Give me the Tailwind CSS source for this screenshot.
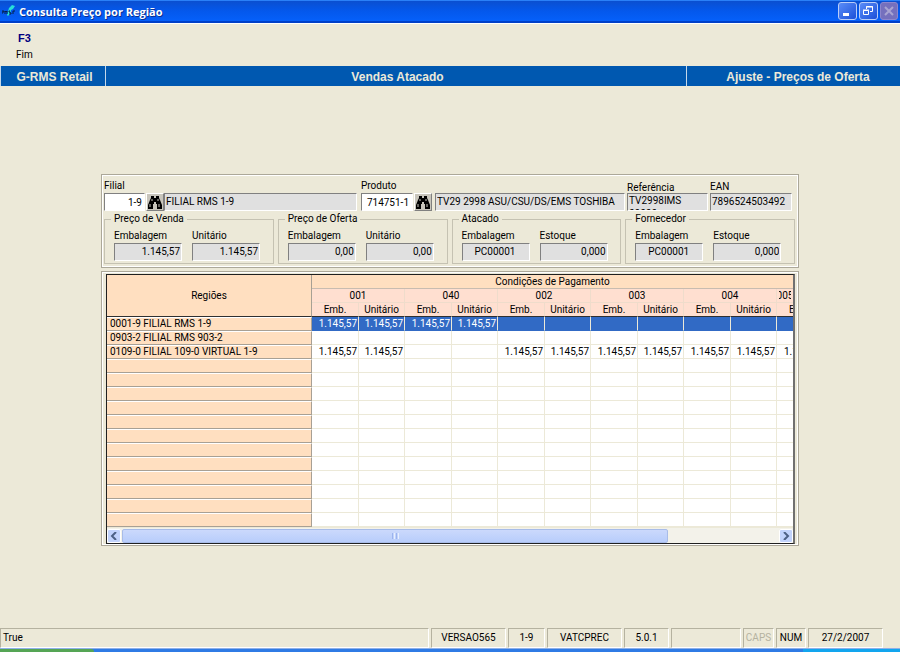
<!DOCTYPE html>
<html lang="pt-BR">

<head>
    <meta charset="UTF-8" />
    <meta name="viewport" content="width=device-width, initial-scale=1.0" />
    <title>Consulta Preço por Região</title>
    <script src="https://cdn.jsdelivr.net/npm/@tailwindcss/browser@4"></script>
</head>

<body class="bg-[#ece9d8] min-h-screen flex flex-col font-[Roboto,'Liberation_Sans',sans-serif] text-[10px] leading-[14px] text-black overflow-hidden">

    <!-- Barra de título -->
    <header class="h-[23px] shrink-0 flex items-center bg-linear-to-b from-[#0a4fd0] via-[#0458ec] to-[#0560fa] border-t border-[#2a80f8] border-b-2 border-b-[#0040c8] pl-[2px] pr-[2px]">
        <svg class="w-[14px] h-[14px] mr-[3px]" viewBox="0 0 14 14" fill="none">
            <path d="M5 11 7 4l3-3 3 1-2 3-2 1-1 4-2 2z" fill="#27e0d8" />
            <path d="M0 7h2v1H0v2M3 10V7l1 1 1-1v3M8 7H7v1l2 1v1H7M13 7h-2v3" stroke="#04204a" stroke-width="1" />
        </svg>
        <h1 class="font-['Open_Sans',sans-serif] font-bold text-[11px] text-white flex-1 [text-shadow:1px_1px_0_#0a2f90] pt-px">Consulta Preço por Região</h1>
        <div class="flex gap-[2px]">
            <button aria-label="Minimizar" class="w-[19px] h-[18px] rounded-[3px] border border-[#b9cdf8] bg-linear-to-br from-[#5a8cf8] to-[#1c4fd8]">
                <svg viewBox="0 0 16 16" class="w-4 h-4"><path d="M4 10h6v3H4z" fill="#fff" /></svg>
            </button>
            <button aria-label="Restaurar" class="w-[19px] h-[18px] rounded-[3px] border border-[#b9cdf8] bg-linear-to-br from-[#5a8cf8] to-[#1c4fd8]">
                <svg viewBox="0 0 16 16" class="w-4 h-4" fill="none" stroke="#fff"><path d="M6.500 6V3.500h6v5H10M6 4h7M3.500 7.500h5v4h-5zM3 7h6" /></svg>
            </button>
            <button aria-label="Fechar" disabled class="w-[18px] h-[18px] rounded-[3px] border border-[#8d86cc] bg-[#7570bd]">
                <svg viewBox="0 0 16 16" class="w-4 h-4"><path d="M4 4l8 8M12 4l-8 8" stroke="#a9a5d2" stroke-width="2" /></svg>
            </button>
        </div>
    </header>

    <!-- Menu de teclas -->
    <nav class="h-[43px] shrink-0 border-t border-white pl-4 pt-[7px]">
        <button class="flex flex-col items-center gap-[3px]">
            <span class="font-['Liberation_Sans',sans-serif] font-bold text-[11px] text-[#000080]">F3</span>
            <span>Fim</span>
        </button>
    </nav>

    <div class="h-5 shrink-0 flex bg-[#0058b0] font-['Liberation_Sans',sans-serif] font-bold text-xs leading-[22px] text-[#ece9d8] text-center">
        <div class="w-[106px] border-x border-[#c4d8ea] pl-[3px]">G-RMS Retail</div>
        <div class="flex-1 pl-[3px]">Vendas Atacado</div>
        <div class="w-[214px] border-l border-[#c4d8ea] pl-[9px]">Ajuste - Preços de Oferta</div>
    </div>

    <main class="flex-1 w-full max-w-[698px] mx-auto pt-[88px]">

        <!-- Filtro e produto -->
        <form class="border border-[#aca899] outline outline-white -outline-offset-2 pl-[2px] pr-[3px] pt-1 h-[94px]">
            <div class="flex items-end">
                <div class="w-[41px]">
                    <label for="filial" class="block">Filial</label>
                    <input id="filial" value="1-9" class="block w-full h-[18px] bg-white text-right pr-[2px] border border-t-[#808080] border-l-[#808080] border-b-white border-r-white" />
                </div>
                <button type="button" aria-label="Procurar filial" class="w-[18px] h-[18px] ml-[1px] flex items-center justify-center bg-[#c8c5bb] border border-t-white border-l-white border-b-[#808080] border-r-[#808080]">
                    <svg viewBox="0 0 14 13" class="w-[14px] h-[13px]"><path d="M3 0h3v2h2V0h3v2l1 2 2 5v4H9V8H8V6H6v2H5v5H0V9l2-5 1-2z" /><path d="M2 8v3M4 3v2M10 3v2M11 8v3" stroke="#c8c5bb" /></svg>
                </button>
                <input aria-label="Nome da filial" readonly value="FILIAL RMS 1-9" class="flex-1 min-w-0 h-[18px] bg-[#e0e0e0] pl-[1px] pb-[2px] border border-t-[#808080] border-l-[#808080] border-b-white border-r-white" />
                <div class="w-[52px] ml-1">
                    <label for="produto" class="block">Produto</label>
                    <input id="produto" value="714751-1" class="block w-full h-[18px] bg-white text-right pr-[3px] border border-t-[#808080] border-l-[#808080] border-b-white border-r-white" />
                </div>
                <button type="button" aria-label="Procurar produto" class="w-[18px] h-[18px] ml-[1px] flex items-center justify-center bg-[#c8c5bb] border border-t-white border-l-white border-b-[#808080] border-r-[#808080]">
                    <svg viewBox="0 0 14 13" class="w-[14px] h-[13px]"><path d="M3 0h3v2h2V0h3v2l1 2 2 5v4H9V8H8V6H6v2H5v5H0V9l2-5 1-2z" /><path d="M2 8v3M4 3v2M10 3v2M11 8v3" stroke="#c8c5bb" /></svg>
                </button>
                <input aria-label="Descrição do produto" readonly value="TV29 2998 ASU/CSU/DS/EMS TOSHIBA" class="w-[190px] h-[18px] ml-[3px] bg-[#e0e0e0] pl-[1px] pb-[2px] border border-t-[#808080] border-l-[#808080] border-b-white border-r-white" />
                <div class="w-[81px] ml-[2px]">
                    <label for="referencia" class="block leading-[10px]">Referência</label>
                    <textarea id="referencia" readonly class="block w-full h-[18px] resize-none overflow-hidden leading-[13px] bg-[#e0e0e0] pl-[1px] border border-t-[#808080] border-l-[#808080] border-b-white border-r-white">TV2998IMS
00000</textarea>
                </div>
                <div class="w-[82px] ml-[2px] mr-[3px]">
                    <label for="ean" class="block leading-3">EAN</label>
                    <input id="ean" readonly value="7896524503492" class="block w-full h-[18px] bg-[#e0e0e0] pl-[1px] pb-[2px] border border-t-[#808080] border-l-[#808080] border-b-white border-r-white" />
                </div>
            </div>

            <div id="grupos" class="grid grid-cols-4 gap-1 pt-[1px]"></div>
        </form>

        <!-- Tabela de preços -->
        <section class="mt-[3px] border border-[#aca899] outline outline-white -outline-offset-2 pl-1 pr-[3px] pt-[2px] pb-[1px]">
            <div class="border border-[#202020] border-r-2 border-r-[#707070] bg-white">
                <table class="w-full table-fixed border-separate border-spacing-0 leading-3">
                    <colgroup>
                        <col class="w-[205px]" />
                        <col class="w-[47px]" /><col class="w-[46px]" />
                        <col class="w-[47px]" /><col class="w-[46px]" />
                        <col class="w-[47px]" /><col class="w-[46px]" />
                        <col class="w-[47px]" /><col class="w-[46px]" />
                        <col class="w-[47px]" /><col class="w-[46px]" />
                        <col />
                    </colgroup>
                    <thead id="cabecalho">
                        <tr class="h-[14px] bg-[#ffdfc0]">
                            <th rowspan="3" class="p-0 font-normal border-r border-[#a8a094] border-b border-b-[#303030]">Regiões</th>
                            <th colspan="11" class="p-0 font-normal border-b border-[#c8bcb0]">Condições de Pagamento</th>
                        </tr>
                    </thead>
                    <tbody id="linhas"></tbody>
                </table>
                <!-- Barra de rolagem -->
                <div class="h-4 flex bg-[#f3f2ea] border-t border-[#ece9d8] pt-[1px]">
                    <button aria-label="Rolar para a esquerda" class="w-[14px] h-[14px] rounded-[2px] bg-[#c2d3fc] border border-white flex items-center justify-center">
                        <svg viewBox="0 0 8 8" class="w-2 h-2" fill="none"><path d="M6 0 2 4l4 4" stroke="#4d6185" stroke-width="2" /></svg>
                    </button>
                    <div class="flex-1 flex">
                        <div class="w-[83%] h-[14px] ml-[1px] rounded-[2px] border border-[#a8bce8] bg-linear-to-b from-[#cbd9fc] to-[#b8cdfb] flex items-center justify-center gap-[1px]">
                            <span class="w-px h-[6px] bg-[#9cb4ee]"></span>
                            <span class="w-px h-[6px] bg-[#e8effe]"></span>
                            <span class="w-px h-[6px] bg-[#9cb4ee]"></span>
                            <span class="w-px h-[6px] bg-[#e8effe]"></span>
                        </div>
                    </div>
                    <button aria-label="Rolar para a direita" class="w-[14px] h-[14px] rounded-[2px] bg-[#c2d3fc] border border-white flex items-center justify-center">
                        <svg viewBox="0 0 8 8" class="w-2 h-2" fill="none"><path d="M2 0l4 4-4 4" stroke="#4d6185" stroke-width="2" /></svg>
                    </button>
                </div>
            </div>
        </section>
    </main>

    <!-- Barra de status -->
    <footer class="shrink-0 h-5 flex gap-[2px] pr-[17px] text-center leading-[18px]">
        <div class="flex-1 text-left pl-[2px] border border-t-[#b5b2a0] border-l-[#b5b2a0] border-white">True</div>
        <div class="w-[75px] border border-t-[#b5b2a0] border-l-[#b5b2a0] border-white">VERSAO565</div>
        <div class="w-[37px] border border-t-[#b5b2a0] border-l-[#b5b2a0] border-white">1-9</div>
        <div class="w-[75px] border border-t-[#b5b2a0] border-l-[#b5b2a0] border-white">VATCPREC</div>
        <div class="w-[45px] border border-t-[#b5b2a0] border-l-[#b5b2a0] border-white">5.0.1</div>
        <div class="w-[70px] border border-t-[#b5b2a0] border-l-[#b5b2a0] border-white"></div>
        <div class="w-[31px] border border-t-[#b5b2a0] border-l-[#b5b2a0] border-white text-[#b5b2a0]">CAPS</div>
        <div class="w-[30px] border border-t-[#b5b2a0] border-l-[#b5b2a0] border-white">NUM</div>
        <div class="w-[75px] border border-t-[#b5b2a0] border-l-[#b5b2a0] border-white">27/2/2007</div>
    </footer>

    <!-- Borda da barra de tarefas -->
    <div class="shrink-0 h-1 flex bg-[#2f7be5] border-t border-[#8fb0e8]">
        <div class="w-[94px] bg-[#55a555] rounded-tr-sm"></div>
        <div class="flex-1"></div>
        <div class="w-[97px] bg-[#12a5ee]"></div>
    </div>

    <script>
        const grupos = [
            ["Preço de Venda", "Embalagem", "1.145,57", "Unitário", "1.145,57"],
            ["Preço de Oferta", "Embalagem", "0,00", "Unitário", "0,00"],
            ["Atacado", "Embalagem", "PC00001", "Estoque", "0,000"],
            ["Fornecedor", "Embalagem", "PC00001", "Estoque", "0,000"]
        ];

        const campo = "block w-full h-[18px] pr-[1px] pb-[2px] bg-[#e0e0e0] border border-t-[#808080] border-l-[#808080] border-b-white border-r-white";

        document.getElementById("grupos").innerHTML = grupos.map(([titulo, l1, v1, l2, v2], i) => `
            <fieldset class="border border-[#c5c2b2] h-[52px] px-[9px] min-w-0">
                <legend class="px-[3px] -ml-[3px]">${titulo}</legend>
                <div class="flex gap-[10px] pt-[3px]">
                    <div class="w-[68px]">
                        <label for="a${i}" class="block">${l1}</label>
                        <input id="a${i}" readonly value="${v1}" class="${campo} ${v1.startsWith("PC") ? "text-center" : "text-right"}" />
                    </div>
                    <div class="w-[68px]">
                        <label for="b${i}" class="block">${l2}</label>
                        <input id="b${i}" readonly value="${v2}" class="${campo} text-right" />
                    </div>
                </div>
            </fieldset>`).join("");

        // Cabeçalho: condições e colunas
        const condicoes = ["001", "040", "002", "003", "004"];
        const th = "p-0 font-normal border-r border-[#efdccb]";
        document.getElementById("cabecalho").insertAdjacentHTML("beforeend", `
            <tr class="h-[14px] bg-[#ffdfd0]">
                ${condicoes.map(c => `<th colspan="2" class="${th} border-b">${c}</th>`).join("")}
                <th class="p-0 font-normal border-b border-[#efdccb]"><div class="flex justify-center overflow-hidden mx-[2px]">005</div></th>
            </tr>
            <tr class="h-[14px] bg-[#ffdfd0]">
                ${condicoes.map(() => `<th class="${th} border-b border-b-[#303030]">Emb.</th><th class="${th} border-b border-b-[#303030]">Unitário</th>`).join("")}
                <th class="p-0 font-normal border-b border-[#303030]"><div class="overflow-hidden text-left pl-3">Emb.</div></th>
            </tr>`);

        // Linhas da grade, completadas com linhas vazias
        const v = "1.145,57";
        const linhas = [
            ["0001-9 FILIAL RMS 1-9", v, v, v, v],
            ["0903-2 FILIAL RMS 903-2"],
            ["0109-0 FILIAL 109-0 VIRTUAL 1-9", v, v, "", "", v, v, v, v, v, v, v]
        ];
        let html = "";
        for (let r = 0; r < 15; r++) {
            const l = linhas[r] || [];
            html += `<tr class="h-[14px] ${r === 0 ? "bg-[#316ac5] text-white" : ""}">
                <th class="p-0 pl-[3px] text-left font-normal text-black whitespace-nowrap bg-[#ffdfc0] border-t border-t-white border-b border-r border-[#a8a094]">${l[0] || ""}</th>`;
            for (let c = 1; c <= 10; c++) {
                html += `<td class="p-0 pr-[1px] text-right border-r border-b border-[#ece9d8] ${r === 0 ? "border-b-[#316ac5]" : ""}">${l[c] || ""}</td>`;
            }
            html += `<td class="p-0 border-b border-[#ece9d8] ${r === 0 ? "border-b-[#316ac5]" : ""}"><div class="overflow-hidden pl-[7px] whitespace-nowrap">${l[11] || ""}</div></td></tr>`;
        }
        document.getElementById("linhas").innerHTML = html;
    </script>

</body>

</html>
